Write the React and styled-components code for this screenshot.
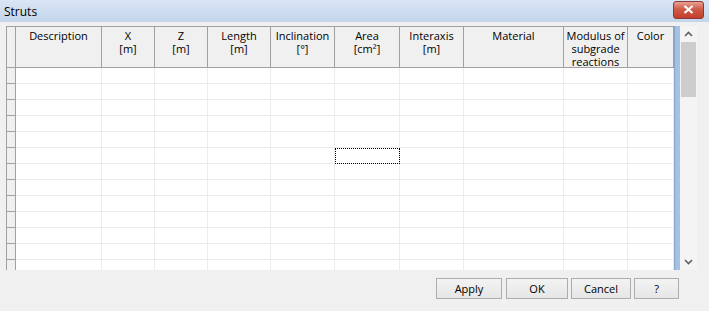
import React from 'react'
import styled, { createGlobalStyle } from 'styled-components'

const GlobalStyle = createGlobalStyle`
  html, body { margin: 0; padding: 0; background: #f0f0f0; }
  body { font-family: "Open Sans", "Noto Sans", sans-serif; font-size: 11px; color: #000; }
`

const COLS = '10px 86px 53px 53px 63px 64px 65px 64px 100px 64px 46px'

const Window = styled.div`
  width: 709px;
  height: 311px;
  display: flex;
  flex-direction: column;
  background: #f0f0f0;
  overflow: hidden;
`
const TitleBar = styled.div`
  height: 22px;
  display: flex;
  align-items: center;
  justify-content: space-between;
  padding-left: 4px;
  background: linear-gradient(#dae6f5, #c3d5ec);
  font-size: 12px;
`
const CloseButton = styled.div`
  width: 29px;
  height: 16px;
  margin-right: 5px;
  margin-bottom: 3px;
  border: 1px solid #8a3a33;
  border-radius: 3px;
  background: linear-gradient(#e8a193, #cf5a48 45%, #c23e2c);
  display: flex;
  align-items: center;
  justify-content: center;
`
const Content = styled.div`
  padding: 4px 0 0 6px;
  display: flex;
`
const Table = styled.div`
  width: 668px;
  height: 244px;
  overflow: hidden;
  background: #fff;
`
const HeaderRow = styled.div`
  display: grid;
  grid-template-columns: ${COLS};
  height: 42px;
  background: #f0f0f0;
  border-top: 1px solid #a0a0a0;
  border-bottom: 1px solid #a0a0a0;
  box-sizing: border-box;
`
const HeaderCell = styled.div`
  border-right: 1px solid #a0a0a0;
  border-left: ${p => (p.$first ? '1px solid #a0a0a0' : 'none')};
  text-align: center;
  line-height: 13px;
  padding-top: 2px;
  white-space: pre-line;
`
const Row = styled.div`
  display: grid;
  grid-template-columns: ${COLS};
  height: 16px;
`
const RowHead = styled.div`
  background: #f0f0f0;
  border-left: 1px solid #a0a0a0;
  border-right: 1px solid #a0a0a0;
  border-bottom: 1px solid #a0a0a0;
`
const Cell = styled.div`
  border-right: 1px solid #ececec;
  border-bottom: 1px solid #ececec;
  outline: ${p => (p.$focused ? '1px dotted #000' : 'none')};
  outline-offset: -1px;
`
const Splitter = styled.div`
  width: 6px;
  height: 244px;
  background: linear-gradient(90deg, #7f9fc9, #a7c1e4 30%, #a7c1e4);
`
const ScrollBar = styled.div`
  width: 17px;
  height: 244px;
  background: #f4f4f4;
  display: flex;
  flex-direction: column;
  align-items: center;
`
const Arrow = styled.div`
  height: 16px;
  display: flex;
  align-items: center;
  justify-content: center;
`
const Thumb = styled.div`
  width: 15px;
  height: 55px;
  background: #cdcdcd;
`
const Track = styled.div`
  flex: 1;
`
const Footer = styled.div`
  display: flex;
  justify-content: flex-end;
  gap: 3px;
  padding: 8px 30px 0 0;
`
const Button = styled.button`
  width: ${p => p.$w}px;
  height: 21px;
  border: 1px solid #adadad;
  background: linear-gradient(#f3f3f3, #e6e6e6);
  font-family: inherit;
  font-size: 11px;
  color: #000;
  padding: 0;
  margin-left: ${p => p.$gap || 0}px;
`

const headers = [
  '',
  'Description',
  'X\n[m]',
  'Z\n[m]',
  'Length\n[m]',
  'Inclination\n[°]',
  'Area\n[cm²]',
  'Interaxis\n[m]',
  'Material',
  'Modulus of\nsubgrade\nreactions',
  'Color',
]

const Chevron = ({ up }) => (
  <svg width="9" height="6" viewBox="0 0 9 6">
    <path
      d={up ? 'M1 5 L4.5 1.5 L8 5' : 'M1 1 L4.5 4.5 L8 1'}
      fill="none"
      stroke="#606060"
      strokeWidth="1.6"
    />
  </svg>
)

const App = () => {
  const rows = Array.from({ length: 13 })
  return (
    <>
      <GlobalStyle />
      <Window>
        <TitleBar>
          Struts
          <CloseButton>
            <svg width="11" height="9" viewBox="0 0 11 9">
              <path d="M1.5 1 L9.5 8 M9.5 1 L1.5 8" stroke="#fff" strokeWidth="2.2" />
            </svg>
          </CloseButton>
        </TitleBar>
        <Content>
          <Table>
            <HeaderRow>
              {headers.map((h, i) => (
                <HeaderCell key={i} $first={i === 0}>{h}</HeaderCell>
              ))}
            </HeaderRow>
            {rows.map((_, r) => (
              <Row key={r}>
                <RowHead />
                {headers.slice(1).map((_, c) => (
                  <Cell key={c} $focused={r === 5 && c === 5} />
                ))}
              </Row>
            ))}
          </Table>
          <Splitter />
          <ScrollBar>
            <Arrow><Chevron up /></Arrow>
            <Thumb />
            <Track />
            <Arrow><Chevron /></Arrow>
          </ScrollBar>
        </Content>
        <Footer>
          <Button $w={66}>Apply</Button>
          <Button $w={62} $gap={1}>OK</Button>
          <Button $w={60}>Cancel</Button>
          <Button $w={45}>?</Button>
        </Footer>
      </Window>
    </>
  )
}

export default App
